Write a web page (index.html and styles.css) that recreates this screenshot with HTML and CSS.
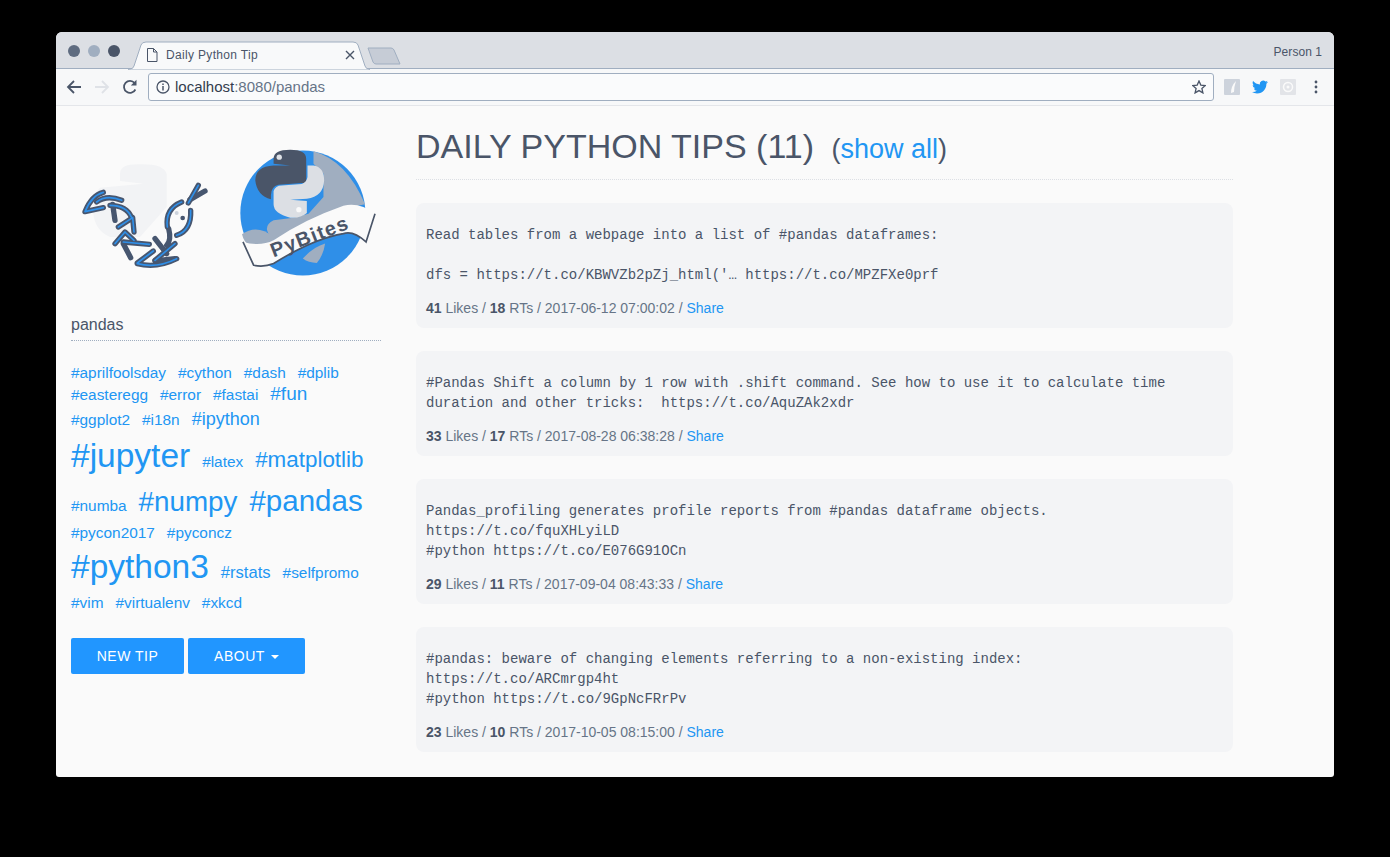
FILE: index.html
```html
<!DOCTYPE html>
<html>
<head>
<meta charset="utf-8">
<title>Daily Python Tip</title>
<link rel="stylesheet" href="styles.css">
</head>

<body>
<div class="window">
	<div class="titlebar">
		<div class="lights">
			<span class="light l1"></span>
			<span class="light l2"></span>
			<span class="light l3"></span>
		</div>
		<div class="tab">
			<svg class="tab-shape" width="242" height="29" viewBox="0 0 242 29">
				<path d="M0 28 H2 Q5 28 6 25 L13 4 Q14 1 18 1 H225 Q229 1 230 4 L237 25 Q238 28 241 28 H242 V29 H0 Z" fill="#f8f9fa" stroke="#a0aec0"/>
			</svg>
			<svg class="tab-icon" width="12" height="14" viewBox="0 0 12 14">
				<path d="M1.5 .5 H7.5 L11 4 V13.5 H1.5 Z M7.5 .5 V4 H11" fill="none" stroke="#4a5568"/>
			</svg>
			<span class="tab-title">Daily Python Tip</span>
			<svg class="tab-close" width="10" height="10" viewBox="0 0 10 10">
				<path d="M1 1 L9 9 M9 1 L1 9" stroke="#4a5568" stroke-width="1.4"/>
			</svg>
		</div>
		<svg class="newtab" width="34" height="18" viewBox="0 0 34 18">
			<path d="M1 1 H24 Q26 1 27 3 L33 17 H9 Q7 17 6 15 Z" fill="#c6ccd6" stroke="#a0aec0"/>
		</svg>
		<span class="person">Person 1</span>
	</div>

	<div class="toolbar">
		<svg class="nav" width="16" height="16" viewBox="0 0 16 16">
			<path d="M15 8 H2 M8 2 L2 8 L8 14" fill="none" stroke="#4a5568" stroke-width="1.8"/>
		</svg>
		<svg class="nav" width="16" height="16" viewBox="0 0 16 16">
			<path d="M1 8 H14 M8 2 L14 8 L8 14" fill="none" stroke="#dfe2e7" stroke-width="1.8"/>
		</svg>
		<svg class="nav" width="16" height="16" viewBox="0 0 16 16">
			<path d="M13.4 10.5 A6 6 0 1 1 12.6 4" fill="none" stroke="#4a5568" stroke-width="1.8"/>
			<path d="M14.5 .8 V6.5 H8.8 Z" fill="#4a5568"/>
		</svg>
		<div class="omnibox">
			<svg class="info" width="14" height="14" viewBox="0 0 14 14">
				<circle cx="7" cy="7" r="6" fill="none" stroke="#4a5568" stroke-width="1.3"/>
				<path d="M7 6 V10.5 M7 3.4 V5" stroke="#4a5568" stroke-width="1.5"/>
			</svg>
			<span class="url"><b>localhost</b>:8080/pandas</span>
			<svg class="star" width="14" height="14" viewBox="0 0 14 14">
				<path d="M7 1 L8.8 5.1 L13.3 5.5 L9.9 8.5 L10.9 12.9 L7 10.6 L3.1 12.9 L4.1 8.5 L.7 5.5 L5.2 5.1 Z" fill="none" stroke="#4a5568" stroke-width="1.3"/>
			</svg>
		</div>
		<div class="extensions">
			<svg width="16" height="16" viewBox="0 0 16 16">
				<rect width="16" height="16" rx="1" fill="#cdd3dc"/>
				<path d="M7 14 Q7 7 12 2 Q10 8 10 13 Z" fill="#fafafa"/>
			</svg>
			<svg width="16" height="16" viewBox="0 0 24 24">
				<path d="M23.953 4.57a10 10 0 01-2.825.775 4.958 4.958 0 002.163-2.723c-.951.555-2.005.959-3.127 1.184a4.92 4.92 0 00-8.384 4.482C7.69 8.095 4.067 6.13 1.64 3.162a4.822 4.822 0 00-.666 2.475c0 1.71.87 3.213 2.188 4.096a4.904 4.904 0 01-2.228-.616v.06a4.923 4.923 0 003.946 4.827 4.996 4.996 0 01-2.212.085 4.936 4.936 0 004.604 3.417 9.867 9.867 0 01-6.102 2.105c-.39 0-.779-.023-1.17-.067a13.995 13.995 0 007.557 2.209c9.053 0 13.998-7.496 13.998-13.985 0-.21 0-.42-.015-.63A9.935 9.935 0 0024 4.59z" fill="#2196f3"/>
			</svg>
			<svg width="16" height="16" viewBox="0 0 16 16">
				<rect width="16" height="16" rx="1" fill="#e2e4e8"/>
				<circle cx="8" cy="8" r="4.5" fill="none" stroke="#fafafa" stroke-width="1.5"/>
				<circle cx="8" cy="8" r="1.5" fill="#fafafa"/>
			</svg>
			<svg width="4" height="14" viewBox="0 0 4 14">
				<circle cx="2" cy="2" r="1.4" fill="#4a5568"/>
				<circle cx="2" cy="7" r="1.4" fill="#4a5568"/>
				<circle cx="2" cy="12" r="1.4" fill="#4a5568"/>
			</svg>
		</div>
	</div>

	<div class="page">
		<div class="side">
			<div class="logos">
				<svg class="logo-snake" width="130" height="114" viewBox="60 90 390 340">
					<path d="M240 102 Q180 100 180 130 L180 152 L250 160 L120 172 Q100 190 100 250 Q105 300 150 320 L240 320 L320 230 L320 130 Q310 100 240 102 Z" fill="#f2f3f5"/>
					<g fill="none" stroke="#47566f" stroke-width="16" stroke-linecap="round" stroke-linejoin="round">
						<path d="M130 186 Q95 195 75 244 L130 232"/>
						<path d="M110 215 Q140 192 185 210"/>
						<path d="M150 225 Q200 225 215 262"/>
						<path d="M158 222 L165 270"/>
						<path d="M175 290 L218 262 L222 305"/>
						<path d="M165 340 L195 305 L222 330"/>
						<path d="M190 335 L268 342"/>
						<path d="M190 340 L212 382"/>
						<path d="M232 398 L280 362"/>
						<path d="M232 400 Q290 415 350 385"/>
						<path d="M285 392 L345 385"/>
						<path d="M285 390 L345 340"/>
						<path d="M285 325 L320 370"/>
						<path d="M320 345 Q335 330 326 295"/>
						<path d="M322 290 Q315 235 365 215"/>
						<path d="M350 315 Q395 300 392 240"/>
						<path d="M385 218 L415 165"/>
						<path d="M390 208 L435 182"/>
					</g>
					<g fill="none" stroke="#2f8fe8" stroke-width="5" stroke-linecap="round" stroke-linejoin="round">
						<path d="M130 186 Q95 195 75 244 L130 232"/>
						<path d="M110 215 Q140 192 185 210"/>
						<path d="M150 225 Q200 225 215 262"/>
						<path d="M175 290 L218 262 L222 305"/>
						<path d="M165 340 L195 305 L222 330"/>
						<path d="M190 335 L268 342"/>
						<path d="M232 398 L280 362"/>
						<path d="M232 400 Q290 415 350 385"/>
						<path d="M285 390 L345 340"/>
						<path d="M322 290 Q315 235 365 215"/>
						<path d="M350 315 Q395 300 392 240"/>
						<path d="M385 218 L415 165"/>
					</g>
					<circle cx="350" cy="248" r="6" fill="#cdd3dc"/>
					<circle cx="368" cy="263" r="7" fill="#47566f"/>
				</svg>
				<svg class="logo-pybites" width="143" height="130" viewBox="530 50 430 390">
					<circle cx="728" cy="248" r="188" fill="#2f8fe8"/>
					<path d="M760 62 Q860 90 915 222 L830 240 L640 330 Q600 290 640 270 L700 262 L745 250 L790 200 L790 130 L760 100 Z" fill="#a0aec0"/>
					<path d="M545 312 Q590 280 640 320 L650 345 L570 350 Q550 335 545 312 Z" fill="#a0aec0"/>
					<path d="M728 385 Q760 350 795 340 Q790 375 770 398 Q745 398 728 385 Z" fill="#a0aec0"/>
					<path d="M548 335 Q600 350 640 330 Q730 268 850 226 Q900 215 945 250 L918 335 Q880 300 850 310 Q760 325 640 400 Q610 412 580 405 Z" fill="#fafafa"/>
					<path d="M548 335 L580 405 Q610 412 640 400 Q760 325 850 310 Q880 300 918 335 L945 250" fill="none" stroke="#4a5568" stroke-width="5"/>
					<text class="pybites-label" x="640" y="382" transform="rotate(-21 640 382)">PyBites</text>
					<path d="M640 85 Q640 58 690 58 Q738 58 738 85 L738 150 Q738 158 725 158 L655 163 Q632 168 632 195 L632 207 Q590 195 585 150 Q585 108 640 105 L690 105 L640 100 Z" fill="#4a5568"/>
					<circle cx="657" cy="80" r="8" fill="#dfe2e7"/>
					<path d="M742 105 L760 105 Q792 110 792 150 Q790 198 740 205 L690 208 L740 212 L740 248 Q720 265 690 262 Q640 250 640 222 L640 182 Q645 165 665 165 L725 161 Q740 155 742 140 Z" fill="#dcdfe4"/>
					<circle cx="716" cy="238" r="8" fill="#fafafa"/>
				</svg>
			</div>

			<div class="search">pandas</div>

			<div class="tags">
				<a href="#" class="s15">#aprilfoolsday</a>
				<a href="#" class="s15">#cython</a>
				<a href="#" class="s15">#dash</a>
				<a href="#" class="s15">#dplib</a>
				<a href="#" class="s15">#easteregg</a>
				<a href="#" class="s15">#error</a>
				<a href="#" class="s15">#fastai</a>
				<a href="#" class="s19">#fun</a>
				<a href="#" class="s15">#ggplot2</a>
				<a href="#" class="s15">#i18n</a>
				<a href="#" class="s18">#ipython</a>
				<a href="#" class="s34">#jupyter</a>
				<a href="#" class="s15">#latex</a>
				<a href="#" class="s22">#matplotlib</a>
				<a href="#" class="s15">#numba</a>
				<a href="#" class="s28">#numpy</a>
				<a href="#" class="s29">#pandas</a>
				<a href="#" class="s15">#pycon2017</a>
				<a href="#" class="s15">#pyconcz</a>
				<a href="#" class="s34 low">#python3</a>
				<a href="#" class="s16">#rstats</a>
				<a href="#" class="s15">#selfpromo</a>
				<a href="#" class="s15">#vim</a>
				<a href="#" class="s15">#virtualenv</a>
				<a href="#" class="s15">#xkcd</a>
			</div>

			<div class="buttons">
				<a href="#" class="btn new">New tip</a>
				<a href="#" class="btn about">About <i class="caret"></i></a>
			</div>
		</div>

		<div class="main">
			<h1>Daily Python Tips (11) <small>(<a href="#">show all</a>)</small></h1>

			<div class="tip">
				<pre>Read tables from a webpage into a list of #pandas dataframes:

dfs = https://t.co/KBWVZb2pZj_html('… https://t.co/MPZFXe0prf</pre>
				<p><b>41</b> Likes / <b>18</b> RTs / 2017-06-12 07:00:02 / <a href="#">Share</a></p>
			</div>
			<div class="tip">
				<pre>#Pandas Shift a column by 1 row with .shift command. See how to use it to calculate time
duration and other tricks:  https://t.co/AquZAk2xdr</pre>
				<p><b>33</b> Likes / <b>17</b> RTs / 2017-08-28 06:38:28 / <a href="#">Share</a></p>
			</div>
			<div class="tip">
				<pre>Pandas_profiling generates profile reports from #pandas dataframe objects.
https://t.co/fquXHLyiLD
#python https://t.co/E076G91OCn</pre>
				<p><b>29</b> Likes / <b>11</b> RTs / 2017-09-04 08:43:33 / <a href="#">Share</a></p>
			</div>
			<div class="tip">
				<pre>#pandas: beware of changing elements referring to a non-existing index:
https://t.co/ARCmrgp4ht
#python https://t.co/9GpNcFRrPv</pre>
				<p><b>23</b> Likes / <b>10</b> RTs / 2017-10-05 08:15:00 / <a href="#">Share</a></p>
			</div>
		</div>
	</div>
</div>
</body>
</html>
```

FILE: styles.css
```css
*{margin:0; padding:0; box-sizing:border-box;}
html,body{height:100%; overflow:hidden;}
body{background:#000; font-family:"Liberation Sans",Arial,sans-serif; color:#4a5568;}
a{color:#2196f3; text-decoration:none;}

.window{width:1278px; height:745px; margin:32px 0 0 56px; border-radius:6px 6px 3px 3px; overflow:hidden; background:#fafafa; display:flex; flex-direction:column;}

.titlebar{height:37px; background:#dcdfe4; border-bottom:1px solid #a0aec0; display:flex; align-items:flex-end; padding-left:12px; position:relative;}
.lights{display:flex; gap:8px; align-self:flex-start; margin-top:13px; width:60px;}
.light{width:12px; height:12px; border-radius:50%;}
.l1{background:#5f6c80;}
.l2{background:#a0aec0;}
.l3{background:#4a5568;}

.tab{width:242px; height:28px; position:relative; display:flex; align-items:center; padding:0 14px 0 18px; margin-bottom:-1px; font-size:12px;}
.tab-shape{position:absolute; left:0; top:0;}
.tab-icon,.tab-title,.tab-close{position:relative;}
.tab-title{flex:1; margin-left:8px; letter-spacing:.33px;}
.tab-close{margin-right:1px;}
.newtab{margin:0 0 3px -3px;}
.person{position:absolute; right:12px; top:13px; font-size:12px; letter-spacing:.05px;}

.toolbar{height:37px; background:#f7f8f9; border-bottom:1px solid #e4e6ea; display:flex; align-items:center; padding:0 12px 1px 10px; flex:none;}
.nav{margin-right:12px;}
.omnibox{width:1066px; height:28px; margin-left:-2px; background:#fafbfc; border:1px solid #a0aec0; border-radius:3px; display:flex; align-items:center; padding:0 7px;}
.info{margin-right:5px;}
.url{flex:1; font-size:15px; color:#667487;}
.url b{font-weight:normal; color:#333d4d;}
.extensions{display:flex; align-items:center; gap:12px; margin-left:10px;}
.extensions svg:last-child{margin-left:6px;}

.page{flex:1; display:flex; overflow:hidden; padding-left:15px;}

.side{width:310px; flex:none;}
.logos{display:flex; align-items:flex-start; gap:27px; margin:41px 0 0 9px; height:132px;}
.logo-snake{margin-top:13px;}
.pybites-label{font-family:"Liberation Sans",Arial,sans-serif; font-weight:bold; font-size:60px; letter-spacing:4px; fill:#4a5568;}
.search{margin-top:36px; height:26px; font-size:16px; line-height:19px; border-bottom:1px dotted #a0aec0; color:#4a5568;}

.tags{margin-top:23px; width:306px;}
.tags a{display:inline-block; margin-right:7.5px; line-height:1.2;}
.s15{font-size:15.4px; margin-bottom:1px;}
.s16{font-size:16.6px; margin-bottom:1px;}
.s18{font-size:18px; margin-bottom:3px;}
.s19{font-size:19px; margin-bottom:3px;}
.s22{font-size:22.4px;}
.s28{font-size:27.8px;}
.s29{font-size:29.5px; margin-bottom:6px;}
.s34{font-size:33.5px; margin-top:2px; margin-bottom:7px;}
.tags .low{margin-top:3px;}

.buttons{display:flex; gap:4px; margin-top:24px;}
.btn{height:36px; background:#2196ff; color:#fff; font-size:14px; line-height:36px; letter-spacing:.5px; text-transform:uppercase; text-align:center; border-radius:2px;}
.new{width:113px;}
.about{width:117px;}
.caret{display:inline-block; width:0; height:0; margin-left:2px; vertical-align:middle; border-top:4px solid #fff; border-left:4px solid transparent; border-right:4px solid transparent;}

.main{width:817px; margin-left:35px; flex:none;}
h1{font-size:34px; font-weight:normal; line-height:36px; text-transform:uppercase; margin-top:22px; padding-bottom:12px; border-bottom:1px dotted #dcdfe4; margin-bottom:23px;}
h1 small{font-size:27px; text-transform:none; margin-left:8px;}

.tip{background:#f3f4f6; border-radius:8px; padding:22px 10px 10px; margin-bottom:23px;}
.tip pre{font-family:"Liberation Mono","Courier New",monospace; font-size:14px; line-height:20px; color:#4a5568; white-space:pre-wrap;}
.tip p{font-size:14px; line-height:20px; margin-top:13px; color:#667487;}
.tip p b{color:#4a5568;}
```
